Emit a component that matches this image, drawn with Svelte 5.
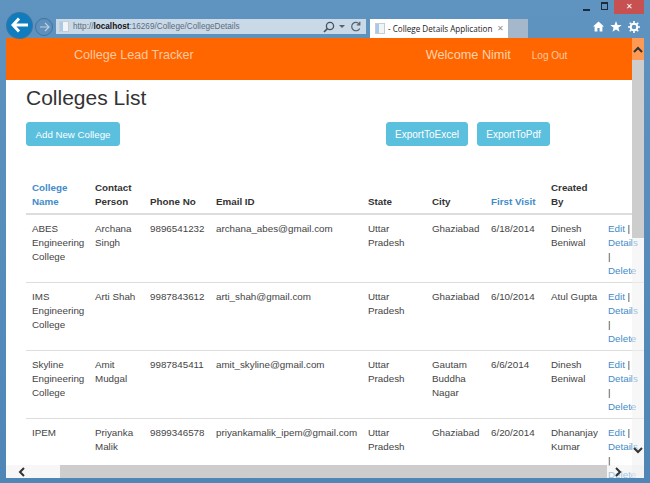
<script>
  const rows = [
    { name: 'ABES Engineering College', person: 'Archana Singh', phone: '9896541232', email: 'archana_abes@gmail.com', state: 'Uttar Pradesh', city: 'Ghaziabad', visit: '6/18/2014', by: 'Dinesh Beniwal' },
    { name: 'IMS Engineering College', person: 'Arti Shah', phone: '9987843612', email: 'arti_shah@gmail.com', state: 'Uttar Pradesh', city: 'Ghaziabad', visit: '6/10/2014', by: 'Atul Gupta' },
    { name: 'Skyline Engineering College', person: 'Amit Mudgal', phone: '9987845411', email: 'amit_skyline@gmail.com', state: 'Uttar Pradesh', city: 'Gautam Buddha Nagar', visit: '6/6/2014', by: 'Dinesh Beniwal' },
    { name: 'IPEM', person: 'Priyanka Malik', phone: '9899346578', email: 'priyankamalik_ipem@gmail.com', state: 'Uttar Pradesh', city: 'Ghaziabad', visit: '6/20/2014', by: 'Dhananjay Kumar' }
  ];
</script>

<div class="window">
  <div class="chrome">
    <div class="controls">
      <span class="min"></span>
      <span class="max"></span>
      <span class="close">✕</span>
    </div>
    <div class="toolbar">
      <div class="nav">
        <span class="back">
          <svg width="18" height="16" viewBox="0 0 18 16"><path d="M8 1.500 2 8l6 6.500M2.500 8H17" fill="none" stroke="#fff" stroke-width="3"/></svg>
        </span>
        <span class="forward">
          <svg width="11" height="10" viewBox="0 0 11 10"><path d="M6 1l4 4-4 4M10 5H1" fill="none" stroke="#b9cfe2" stroke-width="1.200"/></svg>
        </span>
      </div>
      <div class="address">
        <span class="page-icon"></span>
        <span class="url"><span class="dim">http://</span><b>localhost</b><span class="dim">:16269/College/CollegeDetails</span></span>
        <span class="addr-tools">
          <svg width="12" height="12" viewBox="0 0 12 12"><circle cx="7" cy="5" r="3.600" fill="none" stroke="#44525f" stroke-width="1.300"/><path d="M4.400 7.600 1 11" stroke="#44525f" stroke-width="1.600"/></svg>
          <svg width="7" height="5" viewBox="0 0 7 5"><path d="M0 1h6L3 4z" fill="#55626e"/></svg>
          <svg width="11" height="12" viewBox="0 0 11 12"><path d="M9.400 3.200A4.200 4.200 0 1 0 9.700 7.400M9.800 0.800v3H6.800" fill="none" stroke="#55626e" stroke-width="1.200"/></svg>
        </span>
      </div>
      <div class="tab">
        <span class="page-icon"></span>
        <span class="tab-title">- College Details Application</span>
        <span class="tab-x">✕</span>
      </div>
      <div class="tab-new"></div>
      <div class="tools">
        <svg width="11" height="11" viewBox="0 0 11 11"><path d="M5.500 0.500 0 5.500h1.600V10.500h2.800V7h2.200v3.500h2.800V5.500H11z" fill="#fff"/></svg>
        <svg width="12" height="11" viewBox="0 0 12 11"><path d="M6 0l1.500 3.900 4.200.2-3.300 2.600 1.100 4L6 8.500 2.500 10.700l1.100-4L.3 4.100l4.200-.2z" fill="#fff"/></svg>
        <svg width="12" height="12" viewBox="0 0 12 12"><circle cx="6" cy="6" r="3.300" fill="none" stroke="#fff" stroke-width="2"/><path d="M6 0v2.500M6 9.500V12M0 6h2.500M9.500 6H12M1.800 1.800l1.800 1.800M8.400 8.400l1.800 1.800M10.200 1.800 8.400 3.600M3.600 8.400l-1.800 1.800" stroke="#fff" stroke-width="1.600"/></svg>
      </div>
    </div>
  </div>

  <div class="viewport">
    <div class="page">
      <header class="navbar">
        <a class="brand" href="#top">College Lead Tracker</a>
        <span class="welcome">Welcome Nimit</span>
        <a class="logout" href="#top">Log Out</a>
      </header>

      <main class="container">
        <h2>Colleges List</h2>
        <div class="actions">
          <button class="btn add">Add New College</button>
          <div class="export">
            <button class="btn excel">ExportToExcel</button>
            <button class="btn pdf">ExportToPdf</button>
          </div>
        </div>

        <table>
          <colgroup>
            <col class="c1" /><col class="c2" /><col class="c3" /><col class="c4" /><col class="c5" /><col class="c6" /><col class="c7" /><col class="c8" /><col class="c9" />
          </colgroup>
          <thead>
            <tr>
              <th><a href="#top">College Name</a></th>
              <th>Contact Person</th>
              <th>Phone No</th>
              <th>Email ID</th>
              <th>State</th>
              <th>City</th>
              <th><a href="#top">First Visit</a></th>
              <th>Created By</th>
              <th></th>
            </tr>
          </thead>
          <tbody>
            {#each rows as r}
              <tr>
                <td>{r.name}</td>
                <td>{r.person}</td>
                <td>{r.phone}</td>
                <td>{r.email}</td>
                <td>{r.state}</td>
                <td>{r.city}</td>
                <td>{r.visit}</td>
                <td>{r.by}</td>
                <td class="links"><a href="#top">Edit</a> | <a href="#top">Details</a> | <a href="#top">Delete</a></td>
              </tr>
            {/each}
          </tbody>
        </table>
      </main>
    </div>

    <div class="vbar">
      <span class="up"><svg width="10" height="7" viewBox="0 0 10 7"><path d="M1 6l4-4 4 4" fill="none" stroke="#333" stroke-width="2"/></svg></span>
      <span class="vthumb"></span>
      <span class="down"><svg width="10" height="7" viewBox="0 0 10 7"><path d="M1 1l4 4 4-4" fill="none" stroke="#333" stroke-width="2"/></svg></span>
    </div>
    <div class="hbar">
      <span class="left"><svg width="7" height="10" viewBox="0 0 7 10"><path d="M6 1 2 5l4 4" fill="none" stroke="#333" stroke-width="2"/></svg></span>
      <span class="hthumb"></span>
      <span class="right"><svg width="7" height="10" viewBox="0 0 7 10"><path d="M1 1l4 4-4 4" fill="none" stroke="#333" stroke-width="2"/></svg></span>
    </div>
  </div>
</div>

<style>
  :global(body) {
    margin: 0;
    background: #5a8fbd;
  }
  .window {
    width: 650px;
    height: 483px;
    display: flex;
    flex-direction: column;
    box-sizing: border-box;
    padding: 0 6px 5px;
    background: linear-gradient(#5f93c0, #4f86b6);
    font-family: "Liberation Sans", Arial, sans-serif;
    overflow: hidden;
  }
  .chrome {
    height: 38px;
    flex: none;
    display: flex;
    flex-direction: column;
    margin: 0 -6px;
  }
  .controls {
    height: 14px;
    flex: none;
    display: flex;
    justify-content: flex-end;
    align-items: center;
    padding-right: 6px;
    margin-bottom: 5px;
  }
  .min {
    width: 7px;
    height: 2px;
    background: #1d2c3a;
    margin: 5px 11px 0 0;
  }
  .max {
    width: 5px;
    height: 5px;
    border: 1px solid #1d2c3a;
    border-top-width: 2px;
    margin-right: 6px;
    margin-bottom: 2px;
  }
  .close {
    width: 30px;
    height: 14px;
    background: #c75050;
    color: #fff;
    font-size: 8px;
    line-height: 14px;
    text-align: center;
  }
  .toolbar {
    flex: 1;
    display: flex;
    align-items: stretch;
    min-height: 0;
    position: relative;
  }
  .nav {
    width: 56px;
    flex: none;
    display: flex;
    align-items: center;
    padding-left: 7px;
    box-sizing: border-box;
    gap: 3px;
    height: 19px;
  }
  .back {
    width: 25px;
    height: 25px;
    border-radius: 50%;
    background: #0f7dbd;
    display: flex;
    align-items: center;
    justify-content: center;
    flex: none;
    margin-top: -7px;
    position: relative;
    z-index: 1;
    box-shadow: 0 0 0 1px #3c74a3;
  }
  .forward {
    width: 16px;
    height: 16px;
    border-radius: 50%;
    border: 1px solid #3e74a3;
    background: #5f90bb;
    display: flex;
    align-items: center;
    justify-content: center;
    flex: none;
    margin-top: -3px;
  }
  .address {
    width: 310px;
    flex: none;
    height: 15px;
    background: #c9d9e8;
    display: flex;
    align-items: center;
    padding: 0 3px;
    box-sizing: border-box;
  }
  .page-icon {
    width: 10px;
    height: 11px;
    flex: none;
    background: linear-gradient(90deg, #a9c9e6 35%, #f1f4f7 35%);
    border: 1px solid #c6ccd2;
    box-sizing: border-box;
  }
  .url {
    font-size: 8.200px;
    margin-left: 4px;
    color: #111;
    white-space: nowrap;
    flex: 1;
  }
  .dim {
    color: #5c6c7c;
  }
  .addr-tools {
    display: flex;
    align-items: center;
    gap: 4px;
    margin-right: 2px;
  }
  .tab {
    margin-left: 4px;
    width: 138px;
    flex: none;
    background: #fff;
    display: flex;
    align-items: center;
    padding: 0 4px 0 5px;
    box-sizing: border-box;
  }
  .tab-title {
    font-family: "Open Sans", "Liberation Sans", sans-serif;
    font-size: 8.100px;
    color: #222;
    margin-left: 3px;
    white-space: nowrap;
    flex: 1;
  }
  .tab-x {
    font-size: 8px;
    color: #8a8f95;
  }
  .tab-new {
    width: 20px;
    flex: none;
    background: #a4b7cb;
  }
  .tools {
    margin-left: auto;
    display: flex;
    gap: 6px;
    padding: 2px 10px 0 0;
    align-items: flex-start;
  }
  .viewport {
    flex: 1;
    min-height: 0;
    position: relative;
    overflow: hidden;
    background: #fff;
  }
  .page {
    width: 626px;
  }
  .navbar {
    height: 42px;
    background: #ff6600;
    display: flex;
    align-items: center;
    box-sizing: border-box;
    padding: 0 0 8px 68px;
    color: #ffd3ac;
  }
  .navbar a {
    color: #ffc9a0;
    text-decoration: none;
  }
  .brand {
    font-size: 12.600px;
  }
  .welcome {
    font-size: 12.700px;
    margin-left: 232px;
  }
  .logout {
    font-size: 10px;
    margin-left: 21px;
  }
  .container {
    padding: 0 0 0 20px;
  }
  h2 {
    margin: 0;
    padding-top: 5px;
    font-weight: 400;
    font-size: 21px;
    line-height: 26px;
    color: #333;
  }
  .actions {
    display: flex;
    margin-top: 11px;
    width: 524px;
    justify-content: space-between;
  }
  .export {
    display: flex;
    gap: 9px;
  }
  .btn {
    height: 24px;
    padding: 0;
    background: #5bc0de;
    color: #fff;
    border: 1px solid #5bc0de;
    border-radius: 3px;
    font: 10px "Liberation Sans", Arial, sans-serif;
  }
  .add {
    width: 94px;
    font-size: 9.700px;
  }
  .excel {
    width: 82px;
  }
  .pdf {
    width: 73px;
  }
  table {
    border-collapse: collapse;
    table-layout: fixed;
    width: 618px;
    margin-top: 35px;
    font-size: 9.800px;
    line-height: 14px;
    color: #444;
  }
  .c1 { width: 63px; }
  .c2 { width: 55px; }
  .c3 { width: 66px; }
  .c4 { width: 152px; }
  .c5 { width: 64px; }
  .c6 { width: 59px; }
  .c7 { width: 60px; }
  .c8 { width: 57px; }
  .c9 { width: 42px; }
  th {
    text-align: left;
    vertical-align: bottom;
    font-weight: 700;
    color: #333;
    padding: 0 6px 4px;
    border-bottom: 2px solid #ddd;
  }
  th a,
  td a {
    color: #428bca;
    text-decoration: none;
  }
  td {
    vertical-align: top;
    padding: 7px 4px 4px 6px;
    border-bottom: 1px solid #ddd;
  }
  .vbar {
    position: absolute;
    top: 0;
    right: 0;
    width: 12px;
    bottom: 0;
    background: rgba(240, 240, 240, 0.55);
    display: flex;
    flex-direction: column;
    align-items: center;
  }
  .up {
    height: 22px;
    width: 12px;
    flex: none;
    background: #ff9a55;
    display: flex;
    align-items: center;
    justify-content: center;
  }
  .vthumb {
    width: 12px;
    height: 178px;
    background: #cdcdcd;
    flex: none;
  }
  .down {
    margin-top: auto;
    margin-bottom: 24px;
    display: flex;
  }
  .hbar {
    position: absolute;
    left: 0;
    right: 0;
    bottom: 0;
    height: 13px;
    background: rgba(240, 240, 240, 0.55);
    display: flex;
    align-items: center;
  }
  .left {
    width: 54px;
    flex: none;
    padding-left: 12px;
    box-sizing: border-box;
    display: flex;
  }
  .hthumb {
    width: 547px;
    height: 13px;
    background: #cdcdcd;
    flex: none;
  }
  .right {
    position: absolute;
    right: 22px;
    top: 2px;
    display: flex;
  }
</style>
